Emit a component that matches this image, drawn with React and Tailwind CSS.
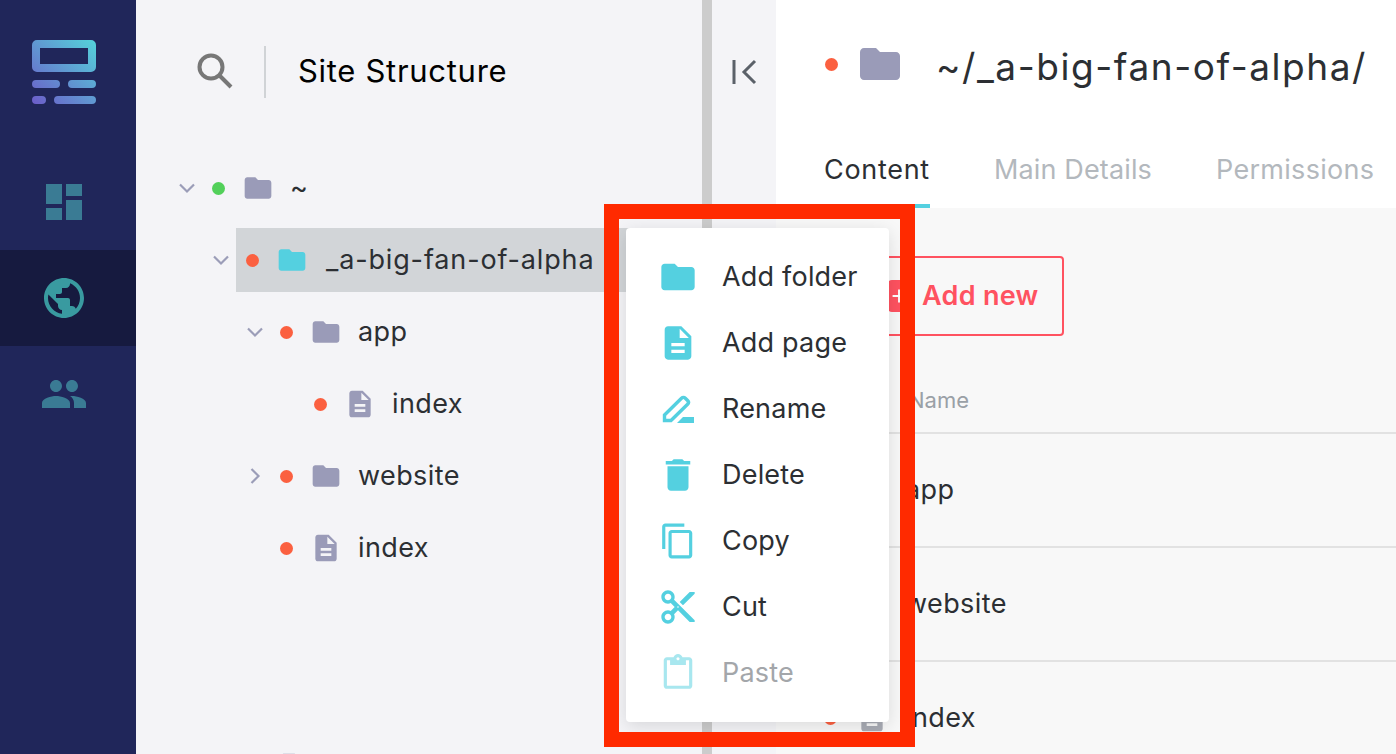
import React from 'react';
import {
  MdDashboard,
  MdPublic,
  MdPeople,
  MdFolder,
  MdDescription,
  MdDelete,
  MdContentCopy,
  MdContentCut,
  MdContentPaste,
  MdAdd,
} from 'react-icons/md';

const treeRows = [
  { depth: 0, chevron: 'down', dot: 'bg-[#52d05a]', type: 'folder', label: '~' },
  { depth: 1, chevron: 'down', dot: 'bg-[#fb6040]', type: 'folder', label: '_a-big-fan-of-alpha', selected: true },
  { depth: 2, chevron: 'down', dot: 'bg-[#fb6040]', type: 'folder', label: 'app' },
  { depth: 3, dot: 'bg-[#fb6040]', type: 'file', label: 'index' },
  { depth: 2, chevron: 'right', dot: 'bg-[#fb6040]', type: 'folder', label: 'website' },
  { depth: 2, dot: 'bg-[#fb6040]', type: 'file', label: 'index' },
];

const tableRows = [
  { type: 'folder', label: 'app' },
  { type: 'folder', label: 'website' },
  { type: 'file', label: 'index' },
];

const Logo = () => (
  <svg width="64" height="64" viewBox="0 0 64 64">
    <defs>
      <linearGradient id="logoGrad" x1="0" y1="1" x2="1" y2="0">
        <stop offset="0" stopColor="#6c5cc9" />
        <stop offset="1" stopColor="#54d3da" />
      </linearGradient>
    </defs>
    <path
      fill="url(#logoGrad)"
      fillRule="evenodd"
      d="M5 0H59A5 5 0 0 1 64 5V27A5 5 0 0 1 59 32H5A5 5 0 0 1 0 27V5A5 5 0 0 1 5 0ZM8 8V24H56V8ZM4 40H24A4 4 0 0 1 24 48H4A4 4 0 0 1 4 40ZM40 40H60A4 4 0 0 1 60 48H40A4 4 0 0 1 40 40ZM4 56H10A4 4 0 0 1 10 64H4A4 4 0 0 1 4 56ZM26 56H60A4 4 0 0 1 60 64H26A4 4 0 0 1 26 56Z"
    />
  </svg>
);

const Chevron = ({ dir }) => (
  <svg width="18" height="18" viewBox="0 0 18 18" fill="none" stroke="#9b9db8" strokeWidth="2.2" className="ml-[2px]">
    {dir === 'down' ? <polyline points="2,5.5 9,12.5 16,5.5" /> : <polyline points="5.5,2 12.5,9 5.5,16" />}
  </svg>
);

const TreeRow = ({ row }) => {
  const color = row.selected ? 'text-[#54d0e0]' : 'text-[#9a9bb8]';
  return (
    <div className="flex h-16 mb-2 items-center" style={{ paddingLeft: row.depth * 34 }}>
      <div className="w-8 shrink-0 flex items-center justify-center">
        {row.chevron && <Chevron dir={row.chevron} />}
      </div>
      <div className={`flex-1 h-full flex items-center ${row.selected ? 'bg-[#d2d5d8]' : ''}`}>
        <div className="w-8 flex justify-center">
          <span className={`w-[13px] h-[13px] rounded-full ${row.dot}`} />
        </div>
        <div className={`w-12 flex justify-center ${color}`}>
          {row.type === 'folder' ? <MdFolder size={32} /> : <MdDescription size={32} />}
        </div>
        <span className={`text-[27px] text-[#2c2f33] whitespace-nowrap ${row.selected ? 'ml-[10px] tracking-[0.85px]' : 'ml-2 tracking-[0.4px]'}`}>
          {row.label}
        </span>
      </div>
    </div>
  );
};

const PencilIcon = () => (
  <svg width="32" height="28" viewBox="0 0 32 28" fill="none">
    <path d="M2.5 25.5V20L19.5 3.2C20.6 2.1 22.2 2.1 23.3 3.2L25.6 5.5C26.7 6.6 26.7 8.2 25.6 9.3L9 25.5Z" stroke="#54d0e0" strokeWidth="3.4" />
    <path d="M15 28L21 22H32V28Z" fill="#54d0e0" />
  </svg>
);

const menuItems = [
  { label: 'Add folder', icon: <MdFolder size={40} /> },
  { label: 'Add page', icon: <MdDescription size={40} /> },
  { label: 'Rename', icon: <PencilIcon /> },
  { label: 'Delete', icon: <MdDelete size={42} /> },
  { label: 'Copy', icon: <MdContentCopy size={38} /> },
  { label: 'Cut', icon: <MdContentCut size={40} /> },
  { label: 'Paste', icon: <MdContentPaste size={38} />, disabled: true },
];

const App = () => {
  return (
    <div className="relative flex w-[1396px] h-[754px] overflow-hidden font-['Inter',sans-serif]">
      <aside className="w-[136px] shrink-0 bg-[#20265a] flex flex-col">
        <div className="h-[136px] pt-10 pr-2 flex justify-center">
          <Logo />
        </div>
        <div className="h-[114px] pt-[18px] pr-2 flex items-center justify-center text-[#3a7b94]">
          <MdDashboard size={48} />
        </div>
        <div className="h-24 pr-2 bg-[#161a3f] flex items-center justify-center text-[#399aa0]">
          <MdPublic size={48} />
        </div>
        <div className="h-24 pr-2 flex items-center justify-center text-[#3a7b94]">
          <MdPeople size={48} />
        </div>
      </aside>

      <section className="w-[566px] shrink-0 bg-[#f4f4f7] flex flex-col">
        <div className="h-[156px] shrink-0 flex items-start pt-[46px] pl-[60px]">
          <svg width="38" height="38" viewBox="0 0 38 38" fill="none" stroke="#777" strokeWidth="4" className="mt-[6px]">
            <circle cx="15" cy="15" r="11.5" />
            <line x1="23.5" y1="23.5" x2="35" y2="35" />
          </svg>
          <div className="ml-[30px] w-[2px] h-[52px] bg-[#d0d3d6]" />
          <h1 className="ml-[32px] h-[52px] leading-[50px] text-[31px] tracking-[0.7px] font-normal text-black">Site Structure</h1>
        </div>
        <div className="pl-[34px]">
          {treeRows.map((row, i) => (
            <TreeRow key={i} row={row} />
          ))}
          <div className="flex mt-[171px]" style={{ paddingLeft: 34 }}>
            <div className="w-8" />
            <div className="w-8" />
            <div className="w-12 flex justify-center text-[#9a9bb8]">
              <MdDescription size={32} />
            </div>
          </div>
        </div>
      </section>

      <div className="w-[10px] shrink-0 bg-[#cccccc]" />

      <div className="w-16 shrink-0 bg-[#f4f4f7] pt-[58px] pl-5">
        <svg width="28" height="28" viewBox="0 0 28 28" fill="none" stroke="#5b6169" strokeWidth="3">
          <line x1="2" y1="2" x2="2" y2="26" />
          <polyline points="23,3 12,14 23,25" />
        </svg>
      </div>

      <main className="flex-1 min-w-0 flex flex-col bg-[#f8f8f8]">
        <div className="h-[208px] bg-white pl-12 shrink-0">
          <div className="h-[130px] flex items-center">
            <span className="ml-px -mt-[2px] w-[13px] h-[13px] rounded-full bg-[#fb6040]" />
            <MdFolder size={48} className="ml-[18px] text-[#9a9bb8] -mt-[2px]" />
            <span className="ml-[32px] mt-1 text-[37px] tracking-[1.55px] text-[#2c2f33] whitespace-nowrap">~/_a-big-fan-of-alpha/</span>
          </div>
          <div className="h-[78px] flex gap-16">
            <div className="h-full border-b-4 border-[#54d0e0] pt-[21px] text-[27px] tracking-[0.7px] leading-[38px] text-[#2c2f33]">Content</div>
            <div className="pt-[21px] text-[27px] tracking-[0.15px] leading-[38px] text-[#b3b8bd] whitespace-nowrap">Main Details</div>
            <div className="pt-[21px] text-[27px] tracking-[0.3px] leading-[38px] text-[#b3b8bd] whitespace-nowrap">Permissions</div>
          </div>
        </div>

        <div className="flex-1 pt-12 pl-12">
          <button className="w-[240px] h-20 rounded border-2 border-[#ff5260] flex items-center pl-[62px] gap-3 text-[#ff5260] text-[27px] tracking-[0.3px] font-semibold">
            <span className="w-[22px] h-8 rounded bg-[#ff5260] text-white flex items-center justify-center">
              <MdAdd size={26} />
            </span>
            <span className="whitespace-nowrap">Add new</span>
          </button>
          <div className="-ml-12 mt-[33px]">
            <div className="h-[65px] border-b-2 border-[#e2e2e2] pl-[132px] flex items-center text-[22px] text-[#9aa0a6]">Name</div>
            {tableRows.map((row) => (
              <div key={row.label} className="h-[114px] border-b-2 border-[#e2e2e2] flex items-center pl-[48px]">
                <span className="w-[13px] h-[13px] rounded-full bg-[#fb6040]" />
                <span className="ml-[19px] text-[#a9acb5]">
                  {row.type === 'folder' ? <MdFolder size={32} /> : <MdDescription size={32} />}
                </span>
                <span className="ml-[17px] text-[27px] tracking-[0.4px] text-[#2c2f33]">{row.label}</span>
              </div>
            ))}
          </div>
        </div>
      </main>

      <div className="absolute left-[626px] top-[228px] w-[263px] py-4 bg-white rounded shadow-[0_4px_18px_rgba(0,0,0,0.12)]">
        {menuItems.map((item) => (
          <div key={item.label} className="h-[66px] flex items-center pl-[27px]">
            <span className={`w-[50px] flex justify-center text-[#54d0e0] ${item.disabled ? 'opacity-50' : ''}`}>
              {item.icon}
            </span>
            <span className={`ml-[19px] text-[27px] tracking-[0.2px] whitespace-nowrap ${item.disabled ? 'text-[#a3a6aa]' : 'text-[#2c2f33]'}`}>
              {item.label}
            </span>
          </div>
        ))}
      </div>

      <div className="absolute left-[604px] top-[204px] w-[311px] h-[543px] border-[15px] border-[#ff2a00] pointer-events-none" />
    </div>
  );
};

export default App;
